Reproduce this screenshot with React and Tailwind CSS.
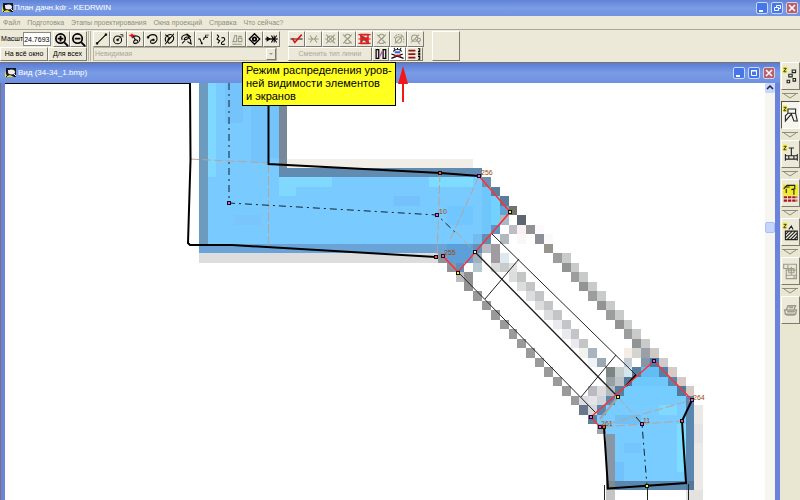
import React from "react";

const bevel =
  "flex items-center justify-center border border-t-white border-l-white border-b-[#7d7b70] border-r-[#7d7b70]";

const Svg = ({ children, className = "w-[15px] h-[15px]" }) => (
  <svg viewBox="0 0 16 16" className={className} fill="none" stroke="currentColor" strokeWidth="1.2">
    {children}
  </svg>
);

const ICONS = {
  line: <><path d="M3 13L13 3" /><path d="M2 12h2v2H2zM12 2h2v2h-2z" fill="currentColor" strokeWidth="0.500" /></>,
  circle: <><circle cx="7" cy="9" r="4.500" /><path d="M7 9l5-5M10 3h3v3" strokeWidth="0.800" /><path d="M6 8h2v2H6z" fill="currentColor" strokeWidth="0.500" /></>,
  edit: <><path d="M4 7c2-4 9-3 9 1s-4 5-6 5-1-4 1-4 3 1 2 2M6 6l2 3" /><path d="M1 4h6M4 2v4" stroke="#e01010" strokeWidth="1.800" /></>,
  lasso: <><path d="M3 6c2-4 9-4 10 0s-2 7-5 7-3-4 0-4" /><path d="M2 5h2v2H2zM8 8h2v2H8z" fill="currentColor" strokeWidth="0.500" /></>,
  lassoCut: <><path d="M4 11C1 6 7 2 10 3s4 5 1 8-5 2-5-1 3-4 4-4M3 14L13 2M3 3l4 3" /></>,
  lassoMulti: <><path d="M3 9c-2-5 4-7 7-5s-2 5-4 5 1-4 4-3 3 5 3 7" /><path d="M3 13l3-3M9 11l5 3M8 2l5 4" /></>,
  step: <><path d="M2 8h2l2 5M8 9l1-3M11 3l-1 3h3" /><path d="M13 3v1M5 13h2" strokeWidth="1.800" /></>,
  hook: <><path d="M4 3l2 2-2 3 3 2-2 3M9 7c3-2 5 1 3 3s-3 1-3 3 3 1 4 1" /></>,
  yes: <><path d="M2 11h5M3 11l2-7h2v7M9 7h4v4H9zM9 5h4M2 14h11" /></>,
  eye: <><path d="M2 8l6-6 6 6-6 6z" strokeWidth="1.500" /><circle cx="8" cy="8" r="2" strokeWidth="2" /></>,
  fish: <><path d="M1 8h14" strokeWidth="1.500" /><path d="M3 6l3 2-3 2zM8 4l2 4-2 4M14 4l-3 4 3 4M11 4v8" strokeWidth="1.200" /></>,
  check: <><path d="M1 8h14" stroke="#222" /><path d="M3 7l3 5 8-9" stroke="#e01010" strokeWidth="1.800" /></>,
  cross: <path d="M2 8h12M4 4l3 4-3 4M12 4L9 8l3 4" />,
  crossBox: <><circle cx="8" cy="8" r="3.500" /><path d="M2 8h3M11 8h3M3 3l10 10M13 3L3 13" /></>,
  crossLoop: <><path d="M3 3l10 10M13 3L3 13M5 6c0-5 6-4 6-1s-6 3-6 6 5 3 7 0" /></>,
  crossDots: <><circle cx="8" cy="9" r="3.500" /><path d="M3 7c1-5 9-6 11 0v5" strokeDasharray="2 1" /><path d="M4 13l9-9" /></>,
  crossLens: <><circle cx="7" cy="7" r="3.500" /><path d="M3 12L12 3M8 8l5 6M11 7c4 0 3 4 0 4" /></>,
  layers: <><path d="M4 3h8v4H4zM4 9h8v4H4z" stroke="#e02020" strokeWidth="1.800" /><path d="M1 3h14M1 8h14M1 13h14M3 4l10 8" stroke="#e02020" /><path d="M5 5l3 1M9 10l2 2M4 11l2-1" stroke="#333" /></>,
  door: <><path d="M3 3h3v10H3zM11 3h3v10h-3z" strokeWidth="1.400" /><path d="M7 11l3-6" stroke="#c04bd0" strokeWidth="1.500" /></>,
  vision: <><path d="M3 5c3-3 7-3 10 0M4 1l1 2M12 1l-1 2M8 1v2" /><path d="M5 5h6v2H5z" stroke="#3468d8" fill="#3468d8" strokeWidth="0.500" /><path d="M1 8l14 5M14 8L1 13" strokeWidth="1.400" /><path d="M4 11c2-2 6-2 8 0" stroke="#c01818" strokeWidth="2" /></>,
  levels: <><path d="M1 4h8M1 8h8M1 12h8" stroke="#8c1414" strokeWidth="2" /><path d="M12 2h2v3h-2M12 7h2v2h-2M12 11h2v3h-2" /></>,
};

const DRAW_TOOLS = ["line", "circle", "edit", "lasso", "lassoCut", "lassoMulti", "step", "hook", "yes", "eye", "fish"];
const CROSS_TOOLS = ["check", "cross", "crossBox", "crossLoop", "layers", "crossLoop", "crossDots", "crossLens"];
const OFF = ["yes", "cross", "crossBox", "crossLoop", "crossDots", "crossLens"];

const ToolButton = ({ name, className = "w-[17px] h-4 bg-[#ece9d8]" }) => (
  <button aria-label={name} className={`${bevel} ${className} ${OFF.includes(name) ? "text-[#9c9a8a]" : "text-black"}`}>
    <Svg className="w-[15px] h-[14px]">{ICONS[name]}</Svg>
  </button>
);

const AppIcon = () => (
  <svg viewBox="0 0 11 10" className="w-[11px] h-[10px] shrink-0">
    <path d="M1 0h10v9H1z" fill="#16181c" />
    <path d="M0 3v6h9L5 7 2 8z" fill="#e8df38" />
    <path d="M1 9l3-3" stroke="#16181c" />
    <ellipse cx="6.500" cy="4" rx="3.500" ry="2.500" fill="#e9eef5" />
    <path d="M3 2l1 1M9 6l2 2" stroke="#fff" />
  </svg>
);

const WindowButtons = ({ middle }) => (
  <div className="flex gap-[3px]">
    <button aria-label="Minimize" className="w-3 h-3 rounded-xs border border-[#c9d8fb] bg-[#4677e8] text-white">
      <svg viewBox="0 0 10 10" className="size-[10px]"><path d="M2 7h4v2H2z" fill="#fff" /></svg>
    </button>
    <button aria-label={middle} className="w-3 h-3 rounded-xs border border-[#c9d8fb] bg-[#4677e8] text-white">
      <svg viewBox="0 0 10 10" className="size-[10px]" fill="none" stroke="#fff">
        {middle === "Restore" ? <path d="M4.500 4V2.500h4v3H7M2.500 4.500h4v3h-4z" /> : <path d="M2.500 2.500h5v5h-5zM2 3h6" />}
      </svg>
    </button>
    <button aria-label="Close" className="w-3 h-3 rounded-xs border border-[#d9cde0] bg-[#b8606c] text-white">
      <svg viewBox="0 0 10 10" className="size-[10px]"><path d="M2 2l6 6M8 2L2 8" stroke="#fff" strokeWidth="1.500" /></svg>
    </button>
  </div>
);

// bitmap underlay: runs of cells as [column, row, columns, rows, colour]
const COL = 8.846;
const ROW = 9.485;
const CELLS = [
  [9, 0, 1, 1, "#788a9a"], [10, 0, 21, 1, "#f1eee8"], [9, 1, 23, 1, "#618bb0"],
  [0, 9, 28, 1, "#69a3d8"], [0, 10, 28, 1, "#dddddd"],
  [1, 2, 31, 7, "#79cbff"], [9, 2, 6, 1, "#80d8ff"], [9, 3, 2, 1, "#80d8ff"], [26, 2, 5, 1, "#7ddcff"],
  [22, 4, 3, 1, "#74c1fb"], [28, 5, 3, 2, "#70c6ff"], [4, 6, 3, 1, "#7ac5fc"],
  [32, 2, 1, 1, "#6d8fae"], [32, 3, 1, 5, "#6fc6fa"], [33, 3, 1, 1, "#5a7f9d"], [33, 4, 1, 3, "#73d2fd"],
  [34, 4, 1, 1, "#5b7c9b"], [34, 5, 1, 1, "#62a3d8"], [35, 5, 1, 1, "#74736a"], [34, 6, 1, 1, "#a9b9c6"],
  [33, 7, 1, 1, "#6296c2"], [35, 7, 1, 1, "#bfbdc4"], [36, 6, 1, 1, "#5c6670"], [36, 7, 1, 1, "#f8f0f2"],
  [37, 7, 1, 1, "#929292"], [38, 7, 1, 1, "#fbf9fb"], [31, 8, 1, 1, "#72bcf0"], [32, 8, 1, 1, "#6290b4"],
  [34, 8, 1, 1, "#b3b8be"], [36, 8, 1, 1, "#f9f7fa"], [38, 8, 1, 1, "#8c9096"], [39, 8, 1, 1, "#fbf9f9"],
  [28, 9, 3, 2, "#5d9fd8"], [31, 9, 1, 1, "#6392b8"], [32, 9, 1, 1, "#b8bcc2"], [33, 9, 1, 2, "#a19ba2"],
  [27, 10, 1, 1, "#909498"], [31, 10, 1, 1, "#a3b0ba"], [34, 10, 1, 1, "#dceaf0"],
  [28, 11, 1, 1, "#8f959b"], [29, 11, 1, 1, "#5e8fbd"], [31, 11, 1, 1, "#b8c8d2"],
  [33, 11, 1, 1, "#d9dcdb"], [34, 11, 1, 1, "#c9cbcb"], [35, 11, 1, 1, "#dfe1e1"], [29, 12, 1, 1, "#bdbdbd"],
  [30, 12, 1, 2, "#929292"], [39, 9, 1, 1, "#98948e"],
  [48, 20, 1, 1, "#f5ece4"], [49, 20, 1, 1, "#d5d5d0"], [50, 20, 1, 1, "#9aa0a8"], [51, 20, 1, 1, "#d0c8c4"],
  [48, 21, 1, 1, "#c5ced6"], [50, 21, 1, 1, "#8496a8"], [51, 21, 1, 1, "#4a7ba5"], [52, 21, 1, 1, "#d0cacb"],
  [48, 22, 1, 1, "#d6e4ec"], [49, 22, 1, 1, "#557f9f"], [52, 22, 1, 1, "#5080a8"], [53, 22, 1, 1, "#d5cac6"],
  [48, 23, 1, 1, "#4f7a9c"], [53, 23, 1, 1, "#5886aa"], [54, 23, 1, 1, "#d5cac6"],
  [47, 24, 1, 1, "#5580a0"], [55, 24, 1, 1, "#d5cac6"], [46, 25, 1, 1, "#5a88ac"], [54, 24, 1, 1, "#4f7a9c"],
  [45, 26, 1, 1, "#5789b0"], [44, 27, 1, 1, "#5e7f98"], [45, 28, 1, 1, "#a0a5aa"],
  [50, 22, 2, 1, "#63bdf5"], [49, 23, 4, 1, "#6fc8fc"], [48, 24, 6, 1, "#74ccff"], [47, 25, 8, 1, "#76cbff"],
  [46, 26, 9, 1, "#79ccff"], [45, 27, 10, 1, "#79ccff"], [46, 28, 9, 1, "#79ccff"], [46, 29, 1, 5, "#8996a4"],
  [47, 29, 8, 5, "#79ccff"], [47, 27, 3, 1, "#70bff5"], [52, 26, 2, 1, "#80d8ff"], [48, 30, 2, 1, "#74c5fb"],
  [47, 32, 1, 2, "#72c1ff"], [54, 28, 1, 5, "#7ddcff"], [55, 25, 1, 9, "#5987b0"], [46, 34, 10, 1, "#5b87ac"],
  [46, 34, 1, 1, "#7f8990"], [55, 34, 1, 1, "#53789a"], [56, 26, 1, 10, "#ebe8e6"], [56, 28, 1, 2, "#e5e3e3"],
  [46, 35, 1, 2, "#c5c5c5"], [55, 35, 2, 2, "#e4e2e0"],
  [43, 20, 1, 1, "#f2f2ee"], [44, 20, 1, 1, "#a8b4c0"], [44, 21, 1, 1, "#f0f4f8"], [45, 21, 1, 1, "#9aa8b4"],
  [46, 22, 1, 1, "#7c8484"], [47, 22, 1, 1, "#c5cccc"], [46, 23, 1, 1, "#999fa3"], [47, 23, 1, 1, "#bcc3c8"],
  [45, 24, 1, 1, "#dcdcde"], [46, 24, 1, 1, "#b4b9be"], [44, 24, 1, 1, "#b9bbc0"], [44, 25, 1, 1, "#e4e4e8"],
  [45, 25, 1, 1, "#ccd3da"], [43, 26, 1, 1, "#66788a"], [44, 26, 1, 1, "#d5d8dd"], [43, 25, 1, 1, "#dcdce2"],
];
for (let r = 10; r < 20; r++) {
  CELLS.push([30 + r, r, 1, 1, r % 2 ? "#929494" : "#9c9d9f"], [31 + r, r, 1, 1, "#c9caca"]);
}
for (let r = 12; r < 20; r++) {
  CELLS.push([23 + r, r, 1, 1, r > 16 ? "#e9e9ee" : "#dcdede"], [24 + r, r, 1, 1, "#c4c5c6"]);
}
for (let r = 14; r < 26; r++) {
  CELLS.push([17 + r, r, 1, 1, "#9a9a9a"]);
}

const POINTS = {
  "#f050f0": [[229, 203], [437, 215], [479, 176], [443, 256], [654, 361], [692, 400], [591, 417], [600, 427], [642, 424]],
  "#f05050": [[440, 173], [436, 257], [604, 427], [682, 421]],
  "#f5f040": [[510, 212], [458, 273], [618, 397], [647, 486]],
  "#e8e8e8": [[475, 252]],
};

const LABELS = [
  ["256", 481, 175], ["255", 444, 255], ["10", 439, 214], ["261", 601, 426], ["264", 693, 400], ["11", 643, 423],
];

const Plan = () => (
  <svg className="block w-full h-full" role="img" aria-label="План">
    <g transform="translate(-5 -83)">
      <g shapeRendering="crispEdges">
        <path d="M199 83h9v179h-9z" fill="#6c9bbd" />
        <path d="M208 83h71v161h-71z" fill="#79cbff" />
        <path d="M208 83h8v161h-8z" fill="#7fd8ff" />
        <path d="M225 83h18v40h-18zM251 83h18v80h-18z" fill="#75c3fb" />
        <path d="M270 83h9v75h-9z" fill="#73c4fb" />
        <path d="M279 83h8v94h-8z" fill="#788898" />
        {CELLS.map(([c, r, w, h, fill], i) => (
          <rect key={i} x={199 + c * COL} y={158.5 + r * ROW} width={w * COL} height={h * ROW} fill={fill} />
        ))}
      </g>

      <g fill="none" stroke="#b8a596" strokeDasharray="9 3">
        <path d="M190 159l78 4M268.500 164v81M440 173l-3 84M479 176l-30 66M604 427l78-6M608 424l84-24M618 397l24 27M456 232l19 20" />
      </g>
      <path d="M618 397l-18 22" stroke="#a9a19b" strokeWidth="2" />
      <g fill="none" stroke="#123" strokeDasharray="7 4 2 4">
        <path d="M229 83v120l208 12 20 19M636 417l6 7 5 62" />
      </g>

      <g fill="none" stroke="#222" strokeWidth="1">
        <path d="M458 272l138 141M492 234l144 141M519 259l-34 40M616 355l-35 42M604.500 485v15M647.500 486v14M688.500 484v16" />
        <path d="M475 252l143 145" strokeWidth="1.400" />
      </g>
      <g fill="none" stroke="#000" strokeWidth="2">
        <path d="M5 83h185l.5 77-2.500 83 2 2h42l204 12M268.500 83v81l172 9 39 3" />
        <path d="M692 400l-10 21 4 62-78 5.500-4-61M636 375l-10 11" />
      </g>
      <g fill="none" stroke="#ff3038" strokeWidth="1.500">
        <path d="M479 176l31 36-52 60-15-16M604 427h-4l-9-10 63-56 38 39" />
      </g>

      {Object.entries(POINTS).map(([fill, pts]) =>
        pts.map(([x, y]) => (
          <rect key={`${x}-${y}`} x={x - 1.5} y={y - 1.5} width="3" height="3" fill={fill} stroke="#111" />
        ))
      )}
      {LABELS.map(([text, x, y]) => (
        <text key={text} x={x} y={y} className="text-[7px] [font-family:'Liberation_Sans',sans-serif]" fill="#9a4a08">
          {text}
        </text>
      ))}
    </g>
  </svg>
);

const STAGES = [
  { name: "1", art: <path d="M12 5h4v3h-4zM8 10h4v3H8zM13 15h3v3h-3zM6 17h3v3H6z" /> },
  { name: "2", active: true, art: <path d="M7 5h9v5l2 9h-4l-3-8-7 8V13l3-3zM7 10h9" /> },
  { name: "3", art: <path d="M8 5h6M11 5v9M4 14h14M4 12v8M18 12v8M4 18h14M8 14v4M14 14v4" /> },
  {
    name: "4",
    art: (
      <>
        <path d="M1 2h18v13H1z" fill="#f1e92c" stroke="none" />
        <path d="M2 7l4-4h9v4l-4 1M5 7v5M14 7v7M3 5h6" />
        <path d="M2 17h16M2 21h16" stroke="#a81818" strokeWidth="2.500" strokeDasharray="4 1" />
      </>
    ),
  },
  { name: "5", art: <path d="M8 9l3-4 2 4M4 11h14v10H4zM4 15l4-4M4 19l8-8M6 21l10-10M10 21l8-8M14 21l4-4" /> },
  { name: "6", off: true, art: <path d="M2 4h5v5H2zM5 9v12h12V4H8M6 11h10M11 7v9M5 17h12M8 9h6v5H8zM13 19h3" /> },
  { name: "7", off: true, art: <path d="M7 7h9l-2 5H5zM3 12h14l-1 5H4zM5 18h10M8 9h5M6 14h9" strokeWidth="1.600" /> },
];

const Stages = () => (
  <nav aria-label="Этапы" className="w-5 shrink-0 flex flex-col items-center bg-[#e9e6d2]">
    {STAGES.map(({ name, active, off, art }, i) => (
      <React.Fragment key={name}>
        <button
          aria-label={`Этап ${name}`}
          className={`w-[19px] h-7 flex items-center justify-center border ${
            active
              ? "bg-[#f6f5ee] border-t-[#55534a] border-l-[#55534a] border-b-white border-r-white"
              : "bg-[#ece9d8] border-t-white border-l-white border-b-[#7d7b70] border-r-[#7d7b70]"
          } ${off ? "text-[#9c9a8a]" : "text-[#222]"}`}
        >
          <svg viewBox="0 0 20 24" className="w-[17px] h-[22px]" fill="none" stroke="currentColor" strokeWidth="1.300">
            {!off && name !== "4" && (
              <>
                <path d="M1 1h5v7H1z" fill="#f1e92c" stroke="none" />
                <path d="M2 3h3L2 7h3" strokeWidth="1" />
              </>
            )}
            {art}
          </svg>
        </button>
        {i < STAGES.length - 1 && (
          <svg viewBox="0 0 18 11" className="w-[18px] h-[11px]" fill="none" stroke="#8f8d80">
            <path d="M1 3.500h16M3 4l6 4 6-4" />
          </svg>
        )}
      </React.Fragment>
    ))}
  </nav>
);

const MENU = ["Файл", "Подготовка", "Этапы проектирования", "Окна проекций", "Справка", "Что сейчас?"];

export default function App() {
  return (
    <div className="relative h-screen flex flex-col overflow-hidden bg-[#ece9d8] text-black [font-family:'Liberation_Sans',Arial,sans-serif]">
      <header className="h-4 shrink-0 flex items-center justify-between pl-[2px] pr-[2px] bg-linear-to-b from-[#6083d6] via-[#7b9de6] to-[#7092e0]">
        <div className="flex items-center gap-px">
          <AppIcon />
          <h1 className="text-[8px] leading-3 text-white whitespace-nowrap">План дачн.kdr - KEDRWIN</h1>
        </div>
        <WindowButtons middle="Restore" />
      </header>

      <nav className="h-[14px] shrink-0 flex items-center gap-[7px] pl-[3px] border-b border-[#aaa89a] text-[7px] leading-3 text-[#8f8d7e] whitespace-nowrap">
        {MENU.map((item) => (
          <button key={item}>{item}</button>
        ))}
      </nav>

      <div className="h-8 shrink-0 flex items-start pt-px text-[7px] leading-3 whitespace-nowrap">
        <div className="w-[87px] flex flex-col">
          <div className="h-4 flex items-center">
            <label htmlFor="scale" className="w-6 pl-px">Масшт</label>
            <input
              id="scale"
              defaultValue="24.7693"
              className="w-7 h-[14px] bg-white border border-[#8b897c] text-[7px]"
            />
            <button aria-label="Увеличить" className={`${bevel} w-[17px] h-4 ml-[2px]`}>
              <Svg><circle cx="7" cy="7" r="5" strokeWidth="1.800" /><path d="M4 7h6M7 4v6M11 11l4 4" strokeWidth="2" /></Svg>
            </button>
            <button aria-label="Уменьшить" className={`${bevel} w-[17px] h-4`}>
              <Svg><circle cx="7" cy="7" r="5" strokeWidth="1.800" /><path d="M4 7h6M11 11l4 4" strokeWidth="2" /></Svg>
            </button>
          </div>
          <div className="flex">
            <button className={`${bevel} w-12 h-[14px]`}>На всё окно</button>
            <button className={`${bevel} w-[39px] h-[14px]`}>Для всех</button>
          </div>
        </div>
        <div className="w-[3px] h-[30px] ml-px mr-[2px] border-x border-[#b5b3a5]" />
        <div className="flex flex-col">
          <div className="flex">
            {DRAW_TOOLS.map((name) => (
              <ToolButton key={name} name={name} />
            ))}
          </div>
          <div className="w-[184px] h-[14px] flex border border-[#b5b3a5]">
            <select
              aria-label="Тип линии"
              disabled
              className="flex-1 appearance-none px-px text-[7px] leading-3 text-[#aaa899] opacity-100"
            >
              <option>Невидимая</option>
            </select>
            <span className={`${bevel} w-[10px]`}>
              <svg viewBox="0 0 6 4" className="w-[6px] h-1"><path d="M1 1h4L3 3z" fill="#9c9a8a" /></svg>
            </span>
          </div>
        </div>
        <div className="flex flex-col ml-2">
          <div className="flex">
            {CROSS_TOOLS.map((name, i) => (
              <ToolButton key={i} name={name} />
            ))}
          </div>
          <div className="flex">
            <button disabled className={`${bevel} w-[84px] h-[14px] text-[#aaa899]`}>Сменить тип линии</button>
            <ToolButton name="door" className="w-[17px] h-[14px]" />
            <ToolButton name="vision" className="w-[17px] h-[14px] bg-white" />
            <ToolButton name="levels" className="w-[17px] h-[14px]" />
          </div>
        </div>
        <button aria-label="Просмотр" className={`${bevel} w-7 h-[30px] ml-2`} />
      </div>

      <main className="flex-1 min-h-0 flex">
        <section className="flex-1 min-w-0 flex flex-col border-t border-[#77756a] bg-[#6a84de]">
          <div className="h-5 shrink-0 flex items-center justify-between pl-[5px] pr-[5px] bg-linear-to-b from-[#5a7cd4] via-[#7a9ce6] to-[#6f90df]">
            <div className="flex items-center gap-[2px]">
              <AppIcon />
              <h2 className="text-[8px] leading-3 text-white whitespace-nowrap">Вид (34-34_1.bmp)</h2>
            </div>
            <WindowButtons middle="Maximize" />
          </div>
          <div className="flex-1 min-h-0 flex pl-1 pr-[5px] border-l border-[#77756a]">
            <div className="flex-1 min-w-0 bg-white">
              <Plan />
            </div>
            <div className="w-[10px] flex flex-col bg-[#f6f5f0]">
              <button aria-label="Вверх" className="w-full h-[10px] flex items-center justify-center bg-[#c6d5fb] rounded-xs">
                <svg viewBox="0 0 8 8" className="size-2" fill="none" stroke="#223" strokeWidth="1.500"><path d="M1 5l3-3 3 3" /></svg>
              </button>
              <div className="h-[31%] shrink-0" />
              <div className="w-full h-[11px] rounded-xs border border-[#a8c0f4] bg-[#c6d5fb]" />
            </div>
          </div>
        </section>
        <Stages />
      </main>

      <div
        role="tooltip"
        className="absolute left-[242px] top-[62px] w-[154px] h-11 pl-[3px] pt-px bg-[#ffff20] border border-black text-[11px] leading-[13px] whitespace-nowrap"
      >
        Режим распределения уров-
        <br />
        ней видимости элементов
        <br />
        и экранов
      </div>
      <svg viewBox="0 0 10 36" className="absolute left-[398px] top-[66px] w-[10px] h-9">
        <path d="M5 0l5 18H6v18H4V18H0z" fill="#f01818" />
      </svg>
    </div>
  );
}
